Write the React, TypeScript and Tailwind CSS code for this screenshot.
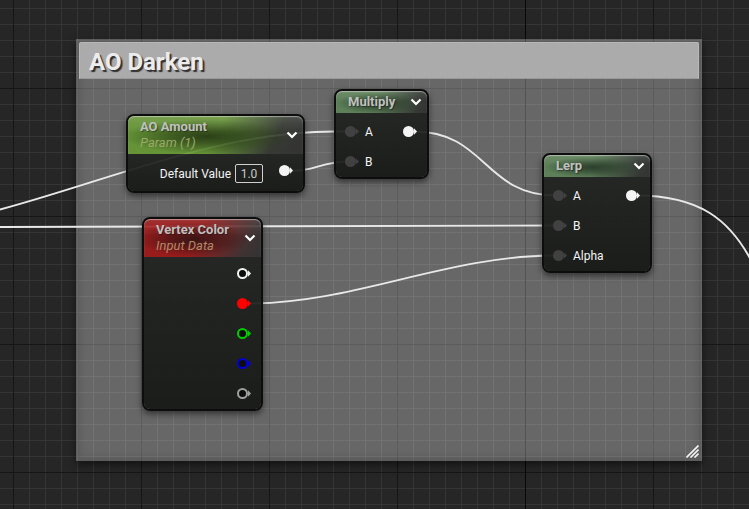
import type { ReactNode } from 'react';

type PinKind = 'white' | 'red' | 'green' | 'blue' | 'gray';

const PIN_COLORS: Record<PinKind, string> = {
  white: '#f4f4f4',
  red: '#ff0000',
  green: '#00d000',
  blue: '#0000d8',
  gray: '#a0a0a0',
};

const WIRES = [
  'M0 209.5 C110 180 220 131.5 334 131.5 H352',
  'M0 227 C180 227 380 225.5 560 225.5',
  'M290 171 C318 171 318 161.5 352 161.5',
  'M414 131.5 C486 131.5 484 195.5 556 195.5',
  'M248 303.5 C355 303.5 445 255.5 556 255.5',
  'M636 195.5 C700 195.5 730 220 752 262',
];

const HEADERS = {
  green:
    'bg-[linear-gradient(to_bottom,#ffffff22,transparent_45%),radial-gradient(ellipse_48%_46%_at_45%_54%,#223a0c_0%,#223a0caa_40%,transparent_100%),linear-gradient(115deg,#659a30_0%,#659a30_50%,#30342c_82%,#2c2c2c_100%)]',
  sage:
    'bg-[linear-gradient(to_bottom,#ffffff1c,transparent_45%),radial-gradient(ellipse_46%_48%_at_46%_56%,#243a24_0%,#243a24aa_40%,transparent_100%),linear-gradient(105deg,#5c8457_0%,#5c8457_45%,#303530_88%,#2c2c2c_100%)]',
  red:
    'bg-[linear-gradient(to_bottom,#ffffff18,transparent_45%),radial-gradient(ellipse_48%_46%_at_42%_54%,#360a0a_0%,#360a0aaa_40%,transparent_100%),linear-gradient(115deg,#a01212_0%,#a01212_45%,#3a2c2c_85%,#2c2c2c_100%)]',
};

function InputPin({ label }: { label: string }) {
  return (
    <div className="flex h-[30px] items-center gap-1.5">
      <svg width="15" height="12" viewBox="0 0 15 12" aria-hidden="true">
        <circle cx="6.5" cy="5.5" r="5.5" fill="#414141" />
        <path d="M12 2.5 L15 5.5 L12 8.5 Z" fill="#414141" />
      </svg>
      <span>{label}</span>
    </div>
  );
}

function OutputPin({ kind = 'white', filled = false }: { kind?: PinKind; filled?: boolean }) {
  const color = PIN_COLORS[kind];

  return (
    <div className="flex h-[30px] items-center">
      <svg width="15" height="12" viewBox="0 0 15 12" aria-hidden="true">
        {filled ? (
          <circle cx="6.5" cy="5.5" r="5.5" fill={color} />
        ) : (
          <circle cx="6.5" cy="5.5" r="4.5" fill="#0c0c0c" stroke={color} strokeWidth="2" />
        )}
        <path d="M12 2.3 L15 5.5 L12 8.7 Z" fill={color} />
      </svg>
    </div>
  );
}

interface NodeProps {
  title: string;
  subtitle?: string;
  tone: keyof typeof HEADERS;
  subtitleClass?: string;
  className: string;
  children: ReactNode;
}

function GraphNode({ title, subtitle, tone, subtitleClass, className, children }: NodeProps) {
  return (
    <section
      className={`absolute rounded-lg border-2 border-[#0d0d0d] shadow-[0_3px_6px_rgba(0,0,0,0.5)] ${className}`}
    >
      <div className="relative">
        <div
          className={`absolute inset-0 rounded-t-md opacity-88 shadow-[inset_0_1px_1px_rgba(255,255,255,0.5)] ${HEADERS[tone]}`}
        />
        <header
          className={`relative flex items-center justify-between pr-[3px] pl-3 ${subtitle ? 'h-[38px]' : 'h-[22px]'}`}
        >
          <div className="text-[13px] leading-4">
            <h2 className="font-bold text-[#c0c0c0] [text-shadow:1px_1px_1px_rgba(0,0,0,0.4)]">{title}</h2>
            {subtitle && <p className={`italic ${subtitleClass}`}>{subtitle}</p>}
          </div>
          <button type="button" aria-label={`Collapse ${title}`} className="p-0.5">
            <svg width="12" height="8" viewBox="0 0 12 8" fill="none">
              <path d="M1.5 1.5 L6 6 L10.5 1.5" stroke="#ffffff" strokeWidth="2.2" />
            </svg>
          </button>
        </header>
      </div>
      <div className="rounded-b-md bg-linear-to-b from-[#1f211f]/92 to-[#161815]/94 pr-2.5 pl-2">{children}</div>
    </section>
  );
}

export default function App() {
  return (
    <main
      className="relative min-h-screen overflow-hidden bg-[#262626] bg-[linear-gradient(to_right,#080808_1px,transparent_1px),linear-gradient(to_right,#161616_1px,transparent_1px),linear-gradient(to_bottom,#161616_1px,transparent_1px),linear-gradient(to_right,#353535_1px,transparent_1px),linear-gradient(to_bottom,#353535_1px,transparent_1px)] bg-size-[1024px_1024px,128px_128px,128px_128px,16px_16px,16px_16px] bg-position-[525px_0,13px_0,0_88px,13px_0,0_8px] font-['Roboto','Liberation_Sans',sans-serif] text-xs text-[#f4f4f4]"
    >
      {/* Comment box */}
      <section className="absolute top-[39px] left-[76px] h-[422px] w-[626px] border-3 border-black/10 bg-white/30 bg-clip-border shadow-[0_4px_8px_rgba(0,0,0,0.5),inset_0_0_8px_rgba(0,0,0,0.15)]">
        <h1 className="rounded-t-xs border border-[#b8b8b8] border-b-[#999999] bg-[#ababab] px-[9px] pt-[3px] text-2xl leading-8 font-bold text-[#ececec] [text-shadow:2px_2px_1px_#303030]">
          AO Darken
        </h1>
        <svg className="absolute right-0 bottom-0" width="13" height="13" viewBox="0 0 13 13" aria-hidden="true">
          <path d="M0.5 12.5 L12.5 0.5 M4.5 12.5 L12.5 4.5 M8.5 12.5 L12.5 8.5" stroke="#f4f4f4" strokeWidth="1.6" />
        </svg>
      </section>

      {/* Wires run under the nodes */}
      <svg className="absolute inset-0 size-full" fill="none" stroke="#e8e8e8" strokeWidth="1.9" aria-hidden="true">
        {WIRES.map((d) => (
          <path key={d} d={d} />
        ))}
      </svg>

      <GraphNode
        title="AO Amount"
        subtitle="Param (1)"
        tone="green"
        subtitleClass="text-[#9aa968]"
        className="top-[114px] left-[126px] w-[179px]"
      >
        <div className="flex items-start justify-end pt-0.5 pb-[5px]">
          <div className="flex items-center gap-1 pt-2 pr-[15px]">
            <label htmlFor="default-value">Default Value</label>
            <input
              id="default-value"
              defaultValue="1.0"
              className="h-[19px] w-7 rounded-xs border border-[#d0d0d0] bg-transparent text-center text-[#c8c8c8]"
            />
          </div>
          <OutputPin filled />
        </div>
      </GraphNode>

      <GraphNode title="Multiply" tone="sage" className="top-[89px] left-[334px] w-[95px]">
        <div className="flex justify-between pt-1">
          <div>
            <InputPin label="A" />
            <InputPin label="B" />
          </div>
          <OutputPin filled />
        </div>
      </GraphNode>

      <GraphNode title="Lerp" tone="sage" className="top-[153px] left-[542px] w-[110px]">
        <div className="flex justify-between pt-1">
          <div>
            <InputPin label="A" />
            <InputPin label="B" />
            <InputPin label="Alpha" />
          </div>
          <OutputPin filled />
        </div>
      </GraphNode>

      <GraphNode
        title="Vertex Color"
        subtitle="Input Data"
        tone="red"
        subtitleClass="text-[#b08a68]"
        className="top-[217px] left-[142px] w-[121px]"
      >
        <div className="flex flex-col items-end pt-0.5">
          <OutputPin />
          <OutputPin kind="red" filled />
          <OutputPin kind="green" />
          <OutputPin kind="blue" />
          <OutputPin kind="gray" />
        </div>
      </GraphNode>
    </main>
  );
}
